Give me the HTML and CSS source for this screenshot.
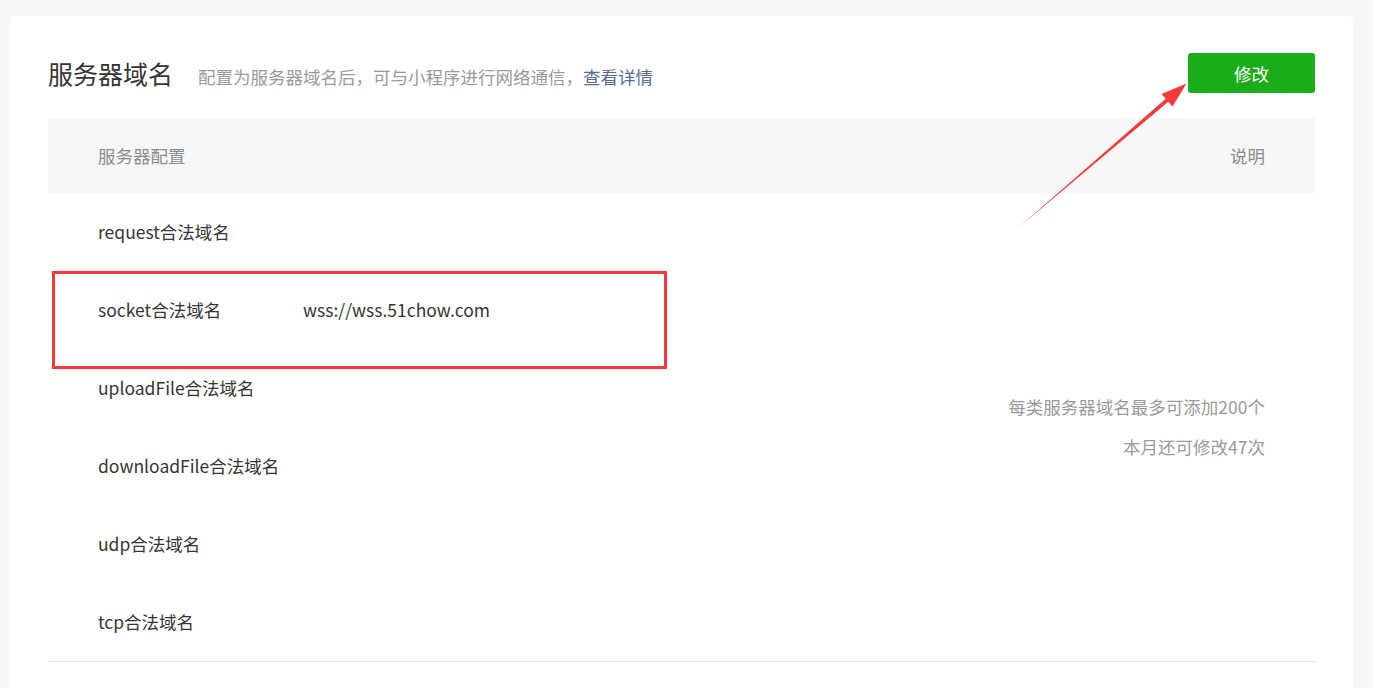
FILE: index.html
```html
<!DOCTYPE html>
<html lang="zh-CN">
<head>
<meta charset="utf-8">
<title>服务器域名</title>
<link rel="stylesheet" href="styles.css">
</head>
<body>
<div class="page">
  <section class="card">
    <div class="head">
      <div class="head-text">
        <h2 class="title">服务器域名</h2>
        <span class="desc">配置为服务器域名后，可与小程序进行网络通信，<a class="link">查看详情</a></span>
      </div>
      <button class="btn">修改</button>
    </div>
    <div class="table">
      <div class="thead">
        <span>服务器配置</span>
        <span>说明</span>
      </div>
      <div class="tbody">
        <div class="rows">
          <div class="row"><span class="label">request合法域名</span><span class="value"></span></div>
          <div class="row"><span class="label">socket合法域名</span><span class="value">wss://wss.51chow.com</span></div>
          <div class="row"><span class="label">uploadFile合法域名</span><span class="value"></span></div>
          <div class="row"><span class="label">downloadFile合法域名</span><span class="value"></span></div>
          <div class="row"><span class="label">udp合法域名</span><span class="value"></span></div>
          <div class="row"><span class="label">tcp合法域名</span><span class="value"></span></div>
        </div>
        <div class="notes">
          <p>每类服务器域名最多可添加200个</p>
          <p>本月还可修改47次</p>
        </div>
      </div>
    </div>
    <div class="mark-box"></div>
  </section>
  <svg class="arrow" width="1373" height="688" viewBox="0 0 1373 688">
    <polygon points="1018,228 1168.3,101.8 1172.5,106.5 1186.5,83.5 1161.5,94 1165.7,98.8" fill="#f43a3a"/>
  </svg>
</div>
</body>
</html>
```

FILE: styles.css
```css
html, body {
  margin: 0;
  padding: 0;
  background: #f6f7f9;
  font-family: "Noto Sans CJK SC", "Noto Sans", sans-serif;
  color: #353535;
  overflow: hidden;
}

.page {
  position: relative;
  width: 1373px;
  height: 688px;
  padding: 16px 20px 0 10px;
  box-sizing: border-box;
}

.card {
  position: relative;
  background: #fff;
  border-radius: 4px 4px 0 0;
  padding: 37px 38px 0 38px;
  height: 672px;
  box-sizing: border-box;
}

.head {
  display: flex;
  justify-content: space-between;
  align-items: center;
  height: 40px;
  margin-bottom: 25px;
}

.head-text {
  display: flex;
  align-items: baseline;
}

.title {
  margin: 0;
  font-size: 25px;
  font-weight: normal;
  color: #353535;
  line-height: 40px;
}

.desc {
  margin-left: 25px;
  font-size: 17.5px;
  color: #9a9a9a;
}

.link {
  color: #576b95;
  text-decoration: none;
}

.btn {
  width: 127px;
  height: 40px;
  border: none;
  border-radius: 3px;
  background: #1aad19;
  color: #fff;
  font-family: inherit;
  font-size: 17.5px;
  padding: 0;
}

.table {
  border-bottom: 1px solid #e7e7eb;
}

.thead {
  display: flex;
  justify-content: space-between;
  align-items: center;
  height: 75px;
  padding: 0 50px 1px;
  box-sizing: border-box;
  background: #f6f7f9;
  font-size: 17.5px;
  color: #8c8c8c;
}

.tbody {
  display: flex;
  justify-content: space-between;
}

.rows {
  display: flex;
  flex-direction: column;
}

.row {
  display: flex;
  align-items: center;
  height: 78px;
  padding-left: 50px;
  padding-bottom: 2px;
  box-sizing: border-box;
  font-size: 17.5px;
  color: #353535;
}

.label {
  width: 205px;
}

.notes {
  display: flex;
  flex-direction: column;
  justify-content: center;
  align-items: flex-end;
  padding-right: 50px;
  font-size: 17.5px;
  color: #9a9a9a;
}

.notes p {
  margin: 0;
  line-height: 40px;
}

.mark-box {
  position: absolute;
  left: 42px;
  top: 255px;
  width: 615px;
  height: 98px;
  border: 3px solid #f43a3a;
  box-sizing: border-box;
}

.arrow {
  position: absolute;
  left: 0;
  top: 0;
  pointer-events: none;
}
```
